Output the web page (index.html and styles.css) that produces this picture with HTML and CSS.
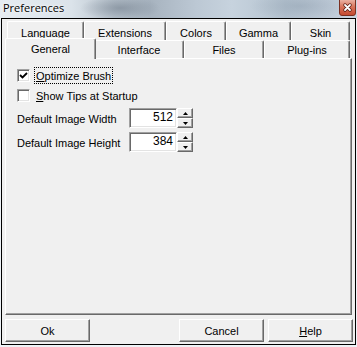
FILE: index.html
```html
<!DOCTYPE html>
<html>
<head>
<meta charset="utf-8">
<title>Preferences</title>
<link rel="stylesheet" href="styles.css">
</head>
<body>
<div class="window">
  <div class="titlebar">
    <span class="title">Preferences</span>
    <span class="close">
      <svg width="17" height="16" viewBox="0 0 17 16">
        <defs>
          <linearGradient id="cg" x1="0" y1="0" x2="0" y2="1">
            <stop offset="0" stop-color="#eab1a2"/>
            <stop offset="0.45" stop-color="#d8735a"/>
            <stop offset="1" stop-color="#c4472d"/>
          </linearGradient>
        </defs>
        <path d="M0.5 0 V13 Q0.5 15.5 3 15.5 H14 Q16.5 15.5 16.5 13 V0" fill="url(#cg)" stroke="#7a3022"/>
        <path d="M6 5 L11 10 M11 5 L6 10" stroke="#5a1d13" stroke-width="3.4" stroke-linecap="round"/>
        <path d="M6 5 L11 10 M11 5 L6 10" stroke="#ffffff" stroke-width="1.8" stroke-linecap="round"/>
      </svg>
    </span>
  </div>
  <div class="client">
    <div class="tabs">
      <div class="tabrow back">
        <div class="tab w-language">Language</div>
        <div class="tab w-extensions">Extensions</div>
        <div class="tab w-colors">Colors</div>
        <div class="tab w-gamma">Gamma</div>
        <div class="tab w-skin">Skin</div>
      </div>
      <div class="tabrow front">
        <div class="tab w-general selected">General</div>
        <div class="tab w-interface">Interface</div>
        <div class="tab w-files">Files</div>
        <div class="tab w-plugins">Plug-ins</div>
      </div>
    </div>
    <div class="panel">
      <div class="checkrow">
        <span class="checkbox">
          <svg width="9" height="9" viewBox="0 0 9 9"><path d="M1 4 L3.5 6.5 L8 2" fill="none" stroke="#000" stroke-width="1.8"/></svg>
        </span>
        <span class="cblabel focus"><u>O</u>ptimize Brush</span>
      </div>
      <div class="checkrow">
        <span class="checkbox"></span>
        <span class="cblabel"><u>S</u>how Tips at Startup</span>
      </div>
      <div class="fieldrow">
        <span class="flabel">Default Image Width</span>
        <span class="edit">512</span>
        <span class="spin">
          <span class="spinbtn"><svg width="5" height="3" viewBox="0 0 5 3"><path d="M2.5 0 L5 3 L0 3 Z" fill="#000"/></svg></span>
          <span class="spinbtn"><svg width="5" height="3" viewBox="0 0 5 3"><path d="M0 0 L5 0 L2.5 3 Z" fill="#000"/></svg></span>
        </span>
      </div>
      <div class="fieldrow">
        <span class="flabel">Default Image Height</span>
        <span class="edit">384</span>
        <span class="spin">
          <span class="spinbtn"><svg width="5" height="3" viewBox="0 0 5 3"><path d="M2.5 0 L5 3 L0 3 Z" fill="#000"/></svg></span>
          <span class="spinbtn"><svg width="5" height="3" viewBox="0 0 5 3"><path d="M0 0 L5 0 L2.5 3 Z" fill="#000"/></svg></span>
        </span>
      </div>
    </div>
    <div class="buttons">
      <button class="btn">Ok</button>
      <span class="spacer"></span>
      <button class="btn">Cancel</button>
      <button class="btn help"><u>H</u>elp</button>
    </div>
  </div>
</div>
</body>
</html>
```

FILE: styles.css
```css
* { box-sizing: border-box; }
html, body { margin: 0; padding: 0; }
body {
  width: 357px;
  height: 347px;
  overflow: hidden;
  background: #eef2f6;
  font-family: "Liberation Sans", Arial, sans-serif;
  font-size: 11px;
  color: #000;
}
.window {
  width: 357px;
  height: 347px;
  display: flex;
  flex-direction: column;
}
.titlebar {
  height: 18px;
  flex: none;
  display: flex;
  align-items: flex-start;
  background:
    radial-gradient(ellipse 40px 12px at 120px 8px, rgba(110,122,136,0.55), rgba(110,122,136,0)),
    radial-gradient(ellipse 50px 14px at 300px 6px, rgba(140,156,172,0.45), rgba(140,156,172,0)),
    linear-gradient(90deg, #e6ecf2 0%, #dbe3ea 20%, #b7c2cc 32%, #a7b3bf 42%, #bcc8d4 55%, #c7d3de 65%, #b4c2cf 80%, #bfcbd8 92%, #c9d4df 100%);
}
.title {
  font-family: "Open Sans", "Liberation Sans", sans-serif;
  font-size: 11px;
  line-height: 16px;
  padding-left: 3px;
  color: #000;
  text-shadow: 0 0 5px rgba(255,255,255,0.95), 0 0 2px rgba(255,255,255,0.9);
}
.close {
  margin-left: auto;
  margin-right: 1px;
  width: 17px;
  height: 16px;
  display: block;
}
.close svg { display: block; }

.client {
  margin: 0 1px;
  height: 327px;
  border: 1px solid #000;
  background: #f0f0f0;
  padding: 2px 0 0 3px;
  display: flex;
  flex-direction: column;
}
.tabs { width: 347px; flex: none; }
.tabrow {
  display: flex;
  padding-left: 2px;
}
.tabrow.back { height: 19px; }
.tabrow.front { height: 18px; }
.tab {
  height: 100%;
  flex: none;
  background: #f0f0f0;
  border-top: 1px solid #fff;
  border-left: 1px solid #fff;
  border-right: 1px solid #696969;
  box-shadow: inset -1px 0 #a0a0a0;
  border-top-left-radius: 2px;
  border-top-right-radius: 2px;
  text-align: center;
  line-height: 12px;
  white-space: nowrap;
}
.back .tab { padding-top: 5px; }
.front .tab { padding-top: 3px; }
.tab.selected {
  position: relative;
  z-index: 1;
  margin: -2px -2px 0;
  height: 21px;
  padding-top: 4px;
}
.w-language { width: 77px; }
.w-extensions { width: 82px; }
.w-colors { width: 60px; }
.w-gamma { width: 65px; }
.w-skin { width: 59px; }
.w-general { width: 87px; }
.w-general.selected { width: 91px; }
.w-interface { width: 90px; }
.w-files { width: 80px; }
.w-plugins { width: 86px; }

.panel {
  width: 347px;
  height: 257px;
  flex: none;
  border-top: 1px solid #fff;
  border-left: 1px solid #fff;
  border-right: 1px solid #696969;
  border-bottom: 1px solid #696969;
  box-shadow: inset -1px -1px #a0a0a0;
  padding: 8px 0 0 11px;
  display: flex;
  flex-direction: column;
}
.checkrow {
  display: flex;
  align-items: center;
  height: 17px;
  margin-bottom: 3px;
}
.checkbox {
  width: 13px;
  height: 13px;
  flex: none;
  background: #fff;
  border-top: 1px solid #a0a0a0;
  border-left: 1px solid #a0a0a0;
  border-right: 1px solid #fff;
  border-bottom: 1px solid #fff;
  box-shadow: inset 1px 1px #696969, inset -1px -1px #e3e3e3;
  display: flex;
  align-items: center;
  justify-content: center;
}
.checkbox svg { display: block; }
.cblabel {
  margin-left: 4px;
  height: 17px;
  border: 1px dotted transparent;
  padding: 1px 1px 0;
  line-height: 14px;
}
.cblabel.focus { border-color: #000; }

.fieldrow {
  display: flex;
  align-items: stretch;
  height: 20px;
  margin-bottom: 4px;
}
.checkrow + .fieldrow { margin-top: 1px; }
.flabel {
  width: 112px;
  flex: none;
  line-height: 20px;
  padding-top: 1px;
}
.edit {
  width: 48px;
  flex: none;
  background: #fff;
  border-top: 1px solid #a0a0a0;
  border-left: 1px solid #a0a0a0;
  border-right: 1px solid #fff;
  border-bottom: 1px solid #fff;
  box-shadow: inset 1px 1px #696969, inset -1px -1px #e3e3e3;
  text-align: right;
  padding-right: 3px;
  font-size: 12px;
  line-height: 17px;
}
.spin {
  width: 16px;
  flex: none;
  display: flex;
  flex-direction: column;
}
.spinbtn {
  height: 10px;
  background: #f0f0f0;
  border-top: 1px solid #fff;
  border-left: 1px solid #fff;
  border-right: 1px solid #696969;
  border-bottom: 1px solid #696969;
  box-shadow: inset -1px -1px #a0a0a0;
  display: flex;
  align-items: center;
  justify-content: center;
}
.spinbtn svg { display: block; }

.buttons {
  display: flex;
  margin-top: 4px;
  height: 23px;
}
.btn {
  width: 85px;
  height: 23px;
  margin: 0;
  padding: 0;
  font-family: "Liberation Sans", Arial, sans-serif;
  font-size: 11px;
  color: #000;
  background: #f0f0f0;
  border-top: 1px solid #fff;
  border-left: 1px solid #fff;
  border-right: 1px solid #696969;
  border-bottom: 1px solid #696969;
  box-shadow: inset -1px -1px #a0a0a0;
  border-radius: 0;
}
.spacer { width: 89px; flex: none; }
.help { margin-left: 4px; }
```
